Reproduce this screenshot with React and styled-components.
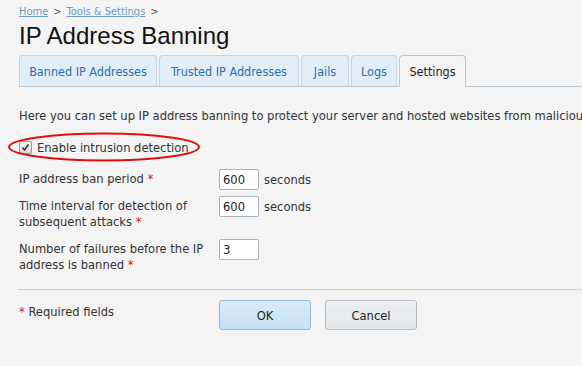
import React from "react";
import styled, { createGlobalStyle } from "styled-components";

const Global = createGlobalStyle`
  html, body { margin: 0; padding: 0; background: #f4f4f4; }
  body { font-family: "DejaVu Sans Condensed", "DejaVu Sans", sans-serif; font-size: 12.8px; color: #333; overflow: hidden; }
`;

const Page = styled.div`
  width: 582px;
  height: 366px;
  overflow: hidden;
  padding-left: 19px;
  box-sizing: border-box;
`;

const Crumbs = styled.div`
  padding-top: 5px;
  font-size: 11px;
  line-height: 14px;
  color: #555;
  display: flex;
  gap: 5px;
  align-items: center;
`;

const CrumbLink = styled.a`
  color: #6f9cc2;
  text-decoration: underline;
`;

const Title = styled.h1`
  margin: 2px 0 0;
  font-family: "Liberation Sans", Arial, sans-serif;
  font-weight: normal;
  font-size: 24px;
  line-height: 30px;
  color: #111;
`;

const TabBar = styled.div`
  margin-top: 4px;
  display: flex;
  gap: 2px;
  border-bottom: 1px solid #b7c6d3;
  height: 31px;
`;

const Tab = styled.div`
  box-sizing: border-box;
  width: ${(p) => p.$w}px;
  display: flex;
  align-items: center;
  justify-content: center;
  font-size: 12.5px;
  white-space: nowrap;
  border: 1px solid ${(p) => (p.$active ? "#b7c6d3" : "#bcd6ea")};
  border-bottom: ${(p) => (p.$active ? "1px solid #f4f4f4" : "none")};
  border-radius: 4px 4px 0 0;
  background: ${(p) => (p.$active ? "#f4f4f4" : "#e2eef7")};
  color: ${(p) => (p.$active ? "#222" : "#2a6fae")};
  height: ${(p) => (p.$active ? "32px" : "31px")};
`;

const Intro = styled.p`
  margin: 21px 0 0;
  line-height: 16px;
  white-space: nowrap;
`;

const CheckRow = styled.label`
  position: relative;
  margin-top: 15px;
  display: flex;
  align-items: center;
  gap: 5px;
  height: 16px;
`;

const Box = styled.span`
  width: 13px;
  height: 13px;
  box-sizing: border-box;
  border: 1px solid #9a9a9a;
  border-radius: 2px;
  background: linear-gradient(#f6f6f6, #d8d8d8);
  display: flex;
  align-items: center;
  justify-content: center;
`;

const Ellipse = styled.svg`
  position: absolute;
  left: -12px;
  top: -7px;
  pointer-events: none;
`;

const Form = styled.div`
  margin-top: 14px;
  display: grid;
  grid-template-columns: 200px 1fr;
  row-gap: 7px;
  align-items: start;
`;

const Label = styled.div`
  line-height: 16px;
  padding: 2px 0;
  white-space: nowrap;
`;

const Req = styled.span`
  color: #d02020;
`;

const Field = styled.div`
  display: flex;
  align-items: center;
  gap: 5px;
  height: 20px;
`;

const Input = styled.div`
  width: 40px;
  height: 21px;
  box-sizing: border-box;
  border: 1px solid #a8b3bd;
  border-radius: 2px;
  background: #fff;
  padding: 0 3px;
  line-height: 19px;
  color: #222;
`;

const Sep = styled.hr`
  margin: 14px 0 0 -1px;
  border: none;
  border-top: 1px solid #cfcfcf;
`;

const Footer = styled.div`
  margin-top: 10px;
  display: grid;
  grid-template-columns: 186px 92px 92px;
  justify-content: start;
  column-gap: 14px;
`;

const Note = styled.div`
  line-height: 16px;
  padding-top: 4px;
  white-space: nowrap;
`;

const Button = styled.div`
  height: 30px;
  box-sizing: border-box;
  border: 1px solid ${(p) => (p.$primary ? "#98b8d4" : "#b3bcc5")};
  border-radius: 3px;
  background: ${(p) =>
    p.$primary ? "linear-gradient(#d9ecfa, #c6e0f5)" : "linear-gradient(#edf0f2, #e2e6ea)"};
  display: flex;
  align-items: center;
  justify-content: center;
  color: #222;
`;

const tabs = [
  { label: "Banned IP Addresses", w: 138 },
  { label: "Trusted IP Addresses", w: 140 },
  { label: "Jails", w: 48 },
  { label: "Logs", w: 46 },
  { label: "Settings", w: 67, active: true },
];

export default function App() {
  return (
    <Page>
      <Global />
      <Crumbs>
        <CrumbLink>Home</CrumbLink>
        <span>&gt;</span>
        <CrumbLink>Tools &amp; Settings</CrumbLink>
        <span>&gt;</span>
      </Crumbs>
      <Title>IP Address Banning</Title>
      <TabBar>
        {tabs.map((t) => (
          <Tab key={t.label} $w={t.w} $active={t.active}>
            {t.label}
          </Tab>
        ))}
      </TabBar>
      <Intro>
        Here you can set up IP address banning to protect your server and hosted websites from malicious connections.
      </Intro>
      <CheckRow>
        <Box>
          <svg width="9" height="9" viewBox="0 0 9 9">
            <path d="M1.5 4.5 L3.5 7 L7.5 1.5" fill="none" stroke="#333" strokeWidth="1.6" />
          </svg>
        </Box>
        Enable intrusion detection
        <Ellipse width="194" height="30" viewBox="0 0 194 30">
          <ellipse cx="97" cy="15" rx="95" ry="13.5" fill="none" stroke="#e01010" strokeWidth="2" />
        </Ellipse>
      </CheckRow>
      <Form>
        <Label>
          IP address ban period <Req>*</Req>
        </Label>
        <Field>
          <Input>600</Input>
          seconds
        </Field>
        <Label>
          Time interval for detection of
          <br />
          subsequent attacks <Req>*</Req>
        </Label>
        <Field>
          <Input>600</Input>
          seconds
        </Field>
        <Label>
          Number of failures before the IP
          <br />
          address is banned <Req>*</Req>
        </Label>
        <Field>
          <Input>3</Input>
        </Field>
      </Form>
      <Sep />
      <Footer>
        <Note>
          <Req>*</Req> Required fields
        </Note>
        <Button $primary>OK</Button>
        <Button>Cancel</Button>
      </Footer>
    </Page>
  );
}
